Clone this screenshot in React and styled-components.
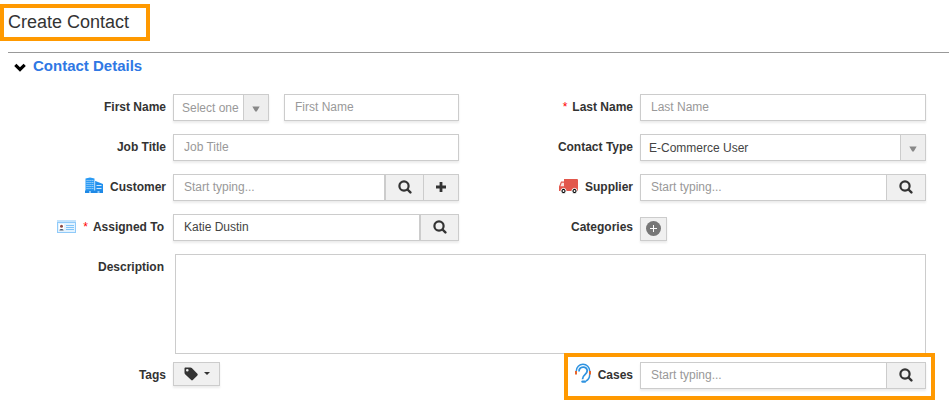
import { useState } from 'react';
import styled, { createGlobalStyle } from 'styled-components';

const GlobalStyle = createGlobalStyle`
  * {
    box-sizing: border-box;
  }

  body {
    margin: 0;
    background: #fff;
    color: #333;
    font-family: "Liberation Sans", Arial, sans-serif;
    font-size: 12px;
  }

  svg {
    display: block;
    flex: none;
  }
`;

const Page = styled.main`
  padding: 4px 0 12px;
`;

const Title = styled.h1`
  width: 150px;
  margin: 0;
  padding: 4px 4px 5px;
  border: 4px solid #ff9900;
  font-size: 18px;
  font-weight: normal;
  line-height: 20px;
`;

const Section = styled.section`
  margin: 11px 0 0 8px;
  border-top: 1px solid #999;
`;

const SectionTitle = styled.h2`
  display: flex;
  align-items: center;
  gap: 7px;
  height: 26px;
  margin: 0 0 15px;
  padding-left: 6px;
  color: #2f78e4;
  font-size: 15px;
  line-height: 26px;
`;

const Row = styled.div`
  display: grid;
  grid-template-columns: 158px 1fr 167px 1fr;
  column-gap: 7px;
  margin: 0 23px ${({ $tight }) => ($tight ? 8 : 13)}px 0;
`;

const Field = styled.div`
  position: relative;
  display: grid;
  grid-column: span ${({ $wide }) => ($wide ? 4 : 2)};
  grid-template-columns: subgrid;
  align-items: start;
`;

const LabelBox = styled.div`
  display: flex;
  justify-content: flex-end;
  align-items: center;
  height: 26px;
  padding-right: ${({ $inset }) => $inset || 0}px;
  font-weight: bold;
  white-space: nowrap;

  svg {
    margin-right: 7px;
  }
`;

const Required = styled.span`
  margin-right: 5px;
  color: #f00;
  font-weight: normal;
`;

const Control = styled.div`
  display: flex;
  min-width: 0;
  grid-column: ${({ $wide }) => ($wide ? '2 / -1' : 'auto')};
  padding-left: ${({ $wide }) => ($wide ? 2 : 0)}px;
`;

const Group = styled.div`
  display: flex;
  flex: 1;
  min-width: 0;
  height: 27px;
  border: 1px solid #ccc;
  box-shadow: 0 2px 2px rgba(0, 0, 0, 0.08);
`;

const Input = styled.input`
  flex: 1;
  min-width: 0;
  padding: 0 10px 1px;
  border: 0;
  outline: none;
  background: #fff;
  color: #444;
  font: inherit;

  &::placeholder {
    color: #999;
    opacity: 1;
  }
`;

const AddonButton = styled.button`
  display: flex;
  justify-content: center;
  align-items: center;
  width: ${({ $width }) => $width || 39}px;
  padding: 0 0 1px;
  border: 0;
  border-left: ${({ $edge }) => $edge || 1}px solid #ccc;
  background: #f0f0f0;
  color: #333;
`;

const SelectBox = styled(Group)`
  position: relative;
  flex: ${({ $width }) => ($width ? `0 0 ${$width}px` : 1)};
  margin-right: ${({ $width }) => ($width ? 15 : 0)}px;
`;

const Select = styled.select`
  flex: 1;
  min-width: 0;
  padding: 0 25px 0 8px;
  border: 0;
  outline: none;
  appearance: none;
  background: #fff;
  color: ${({ $muted }) => ($muted ? '#999' : '#444')};
  font: inherit;
`;

const SelectArrow = styled.span`
  position: absolute;
  top: 0;
  right: 0;
  bottom: 0;
  display: flex;
  justify-content: center;
  align-items: center;
  width: 25px;
  padding-top: 3px;
  border-left: 1px solid #ccc;
  background: #eee;
  pointer-events: none;
`;

const TextArea = styled.textarea`
  flex: 1;
  height: 100px;
  padding: 6px 10px;
  border: 1px solid #ccc;
  outline: none;
  resize: none;
  font: inherit;
`;

const SmallButton = styled.button`
  display: flex;
  justify-content: center;
  align-items: center;
  gap: 6px;
  width: ${({ $width }) => $width}px;
  height: 24px;
  margin-top: ${({ $drop }) => ($drop ? 3 : 0)}px;
  padding: 0 0 1px;
  border: 1px solid #ccc;
  background: #f0f0f0;
  box-shadow: 0 2px 2px rgba(0, 0, 0, 0.08);
  color: #333;
`;

const Highlight = styled.div`
  position: absolute;
  top: -9px;
  right: -9px;
  bottom: -11px;
  left: 98px;
  border: 4px solid #ff9900;
  pointer-events: none;
`;

const ChevronIcon = () => (
  <svg width="12" height="12" viewBox="0 0 12 12">
    <path d="M.2 6L2.4 3.8 6 7.2l3.6-3.4L11.8 6 6 11.8z" fill="#000" />
  </svg>
);

const SearchIcon = () => (
  <svg width="14" height="14" viewBox="0 0 14 14" fill="none" stroke="currentColor">
    <circle cx="6" cy="6" r="4.6" strokeWidth="2.2" />
    <path d="M9.5 9.5l2.9 2.9" strokeWidth="2.4" strokeLinecap="round" />
  </svg>
);

const PlusIcon = () => (
  <svg width="10" height="10" viewBox="0 0 10 10">
    <path d="M3.6 0h2.8v3.6H10v2.8H6.4V10H3.6V6.4H0V3.6h3.6z" fill="currentColor" />
  </svg>
);

const CirclePlusIcon = () => (
  <svg width="15" height="15" viewBox="0 0 15 15">
    <circle cx="7.5" cy="7.5" r="7.5" fill="#777" />
    <path d="M7.5 4v7M4 7.5h7" stroke="#fff" />
  </svg>
);

const TriangleIcon = () => (
  <svg width="8" height="6" viewBox="0 0 8 6">
    <path d="M.3.5h7.4L4.7 5.5H3.3z" fill="#888" />
  </svg>
);

const CaretIcon = () => (
  <svg width="6" height="3" viewBox="0 0 6 3">
    <path d="M0 0h6L3 3z" fill="currentColor" />
  </svg>
);

const TagIcon = () => (
  <svg width="14" height="14" viewBox="0 0 14 14">
    <path
      d="M1.5.5h4.8c.6 0 1.1.2 1.5.6l5.6 5.7c.5.5.5 1.1 0 1.6l-4.6 4.7c-.5.5-1.1.5-1.6 0L1.1 7.3C.7 6.9.5 6.4.5 5.8V1.5c0-.6.4-1 1-1zM3.3 2a1.3 1.3 0 100 2.6 1.3 1.3 0 000-2.6z"
      fill="currentColor"
      fillRule="evenodd"
    />
  </svg>
);

const BuildingIcon = () => (
  <svg width="18" height="20" viewBox="0 0 18 20">
    <path d="M.5 1.5L5 .5l4.5 1V16H.5z" fill="#2b9bf4" />
    <path d="M1.5 3.5h7M1.5 5.5h7M1.5 7.5h7M1.5 9.5h7M1.5 11.5h7" stroke="#c6e3fc" strokeWidth=".8" strokeDasharray="1.2 .7" />
    <path d="M9.8 3.8L18 7v9H9.8z" fill="#2390ee" />
    <path d="M11.5 8.5h5M11.5 11.5h5" stroke="#cfe7fc" />
    <path d="M9.8 3.5V16" stroke="#fff" strokeWidth=".5" />
    <path d="M0 13.5h18V16H0z" fill="#1e88e5" />
    <path d="M4 14h2v2H4zM12.5 14h2v2h-2z" fill="#8fc9fa" />
  </svg>
);

const CardIcon = () => (
  <svg width="19" height="15" viewBox="0 0 19 15">
    <path d="M0 0h19v13H0z" fill="#90caf9" />
    <path d="M0 0h19v2H0z" fill="#c3e3fc" />
    <path d="M1 3h17v9H1z" fill="#e3f3ff" />
    <path d="M2 4h5v7H2z" fill="#fff" />
    <circle cx="4.5" cy="6.2" r="1.5" fill="#8d4b45" />
    <path d="M2.3 10.5c0-2 4.4-2 4.4 0z" fill="#455a74" />
    <path d="M9 5.5h8M9 7.5h8M9 9.5h8" stroke="#81c4f8" />
  </svg>
);

const TruckIcon = () => (
  <svg width="19" height="17" viewBox="0 0 19 17">
    <path d="M5 0h13q1 0 1 1v11H0V7.5L2 2.5h3z" fill="#e2574c" />
    <path d="M2.7 3.8H5v3.4H1.4z" fill="#fbe3e1" />
    <g fill="#000" stroke="#fff">
      <circle cx="4.5" cy="12" r="2.6" />
      <circle cx="15.5" cy="12" r="2.6" />
    </g>
    <circle cx="4.5" cy="12" r="1" fill="#fff" />
    <circle cx="15.5" cy="12" r="1" fill="#fff" />
  </svg>
);

const SupportIcon = () => (
  <svg width="16" height="24" viewBox="0 0 16 24" fill="none" stroke="#2f93e0">
    <path d="M1.3 8a6.7 6.7 0 0113.4 0v3.5q0 4.5-3.7 6.5" strokeWidth="1.5" />
    <path d="M4 8.5c0-5.6 8.2-5.8 8.2-.7 0 4.2-4.7 3.6-4.7 8.4" strokeWidth="1.8" />
    <path d="M1 8v3.5M15 8v3.5" stroke="#e8662c" strokeWidth="2" />
    <path d="M7.5 18.6h2.5" strokeWidth="2.4" strokeLinecap="round" />
  </svg>
);

const Label = ({ id, icon, required, inset, children }) => (
  <LabelBox $inset={inset}>
    {icon}
    {required && <Required>*</Required>}
    <label htmlFor={id}>{children}</label>
  </LabelBox>
);

const Dropdown = ({ width, muted, children, ...rest }) => (
  <SelectBox $width={width}>
    <Select $muted={muted} {...rest}>{children}</Select>
    <SelectArrow><TriangleIcon /></SelectArrow>
  </SelectBox>
);

function App() {
  const [assigned, setAssigned] = useState('Katie Dustin');

  return (
    <>
      <GlobalStyle />
      <Page>
        <Title>Create Contact</Title>
        <Section>
          <SectionTitle><ChevronIcon />Contact Details</SectionTitle>
          <form onSubmit={(event) => event.preventDefault()}>
            <Row>
              <Field>
                <Label id="firstName">First Name</Label>
                <Control>
                  <Dropdown width={96} muted aria-label="Salutation">
                    <option>Select one</option>
                  </Dropdown>
                  <Group><Input id="firstName" placeholder="First Name" /></Group>
                </Control>
              </Field>
              <Field>
                <Label id="lastName" required>Last Name</Label>
                <Control>
                  <Group><Input id="lastName" placeholder="Last Name" /></Group>
                </Control>
              </Field>
            </Row>

            <Row>
              <Field>
                <Label id="jobTitle">Job Title</Label>
                <Control>
                  <Group><Input id="jobTitle" placeholder="Job Title" /></Group>
                </Control>
              </Field>
              <Field>
                <Label id="contactType">Contact Type</Label>
                <Control>
                  <Dropdown id="contactType">
                    <option>E-Commerce User</option>
                  </Dropdown>
                </Control>
              </Field>
            </Row>

            <Row>
              <Field>
                <Label id="customer" icon={<BuildingIcon />}>Customer</Label>
                <Control>
                  <Group>
                    <Input id="customer" placeholder="Start typing..." />
                    <AddonButton type="button" $edge={2} aria-label="Search customer"><SearchIcon /></AddonButton>
                    <AddonButton type="button" $width={35} aria-label="Add customer"><PlusIcon /></AddonButton>
                  </Group>
                </Control>
              </Field>
              <Field>
                <Label id="supplier" icon={<TruckIcon />}>Supplier</Label>
                <Control>
                  <Group>
                    <Input id="supplier" placeholder="Start typing..." />
                    <AddonButton type="button" aria-label="Search supplier"><SearchIcon /></AddonButton>
                  </Group>
                </Control>
              </Field>
            </Row>

            <Row>
              <Field>
                <Label id="assignedTo" icon={<CardIcon />} required inset={2}>Assigned To</Label>
                <Control>
                  <Group>
                    <Input id="assignedTo" value={assigned} onChange={(event) => setAssigned(event.target.value)} />
                    <AddonButton type="button" $edge={2} aria-label="Search user"><SearchIcon /></AddonButton>
                  </Group>
                </Control>
              </Field>
              <Field>
                <Label id="categories">Categories</Label>
                <Control>
                  <SmallButton id="categories" type="button" $width={27} $drop><CirclePlusIcon /></SmallButton>
                </Control>
              </Field>
            </Row>

            <Row $tight>
              <Field $wide>
                <Label id="description" inset={2}>Description</Label>
                <Control $wide><TextArea id="description" /></Control>
              </Field>
            </Row>

            <Row>
              <Field>
                <Label id="tags">Tags</Label>
                <Control>
                  <SmallButton id="tags" type="button" $width={47}><TagIcon /><CaretIcon /></SmallButton>
                </Control>
              </Field>
              <Field>
                <Label id="cases" icon={<SupportIcon />}>Cases</Label>
                <Control>
                  <Group>
                    <Input id="cases" placeholder="Start typing..." />
                    <AddonButton type="button" aria-label="Search cases"><SearchIcon /></AddonButton>
                  </Group>
                </Control>
                <Highlight />
              </Field>
            </Row>
          </form>
        </Section>
      </Page>
    </>
  );
}

export default App;
